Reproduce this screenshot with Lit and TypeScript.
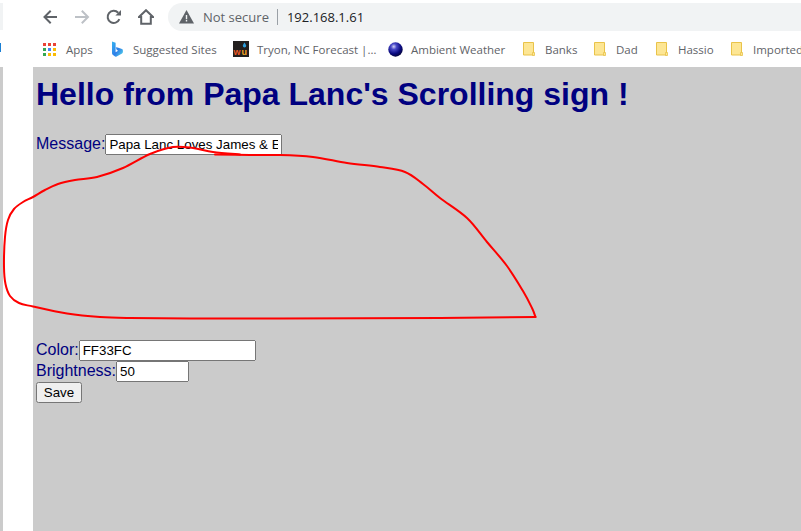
import { LitElement, html, css, svg } from "lit";
import { customElement } from "lit/decorators.js";

type Pt = [number, number];

function smooth(pts: Pt[]): string {
  let d = `M${pts[0][0]} ${pts[0][1]}`;
  for (let i = 0; i < pts.length - 1; i++) {
    const p0 = pts[Math.max(i - 1, 0)];
    const p1 = pts[i];
    const p2 = pts[i + 1];
    const p3 = pts[Math.min(i + 2, pts.length - 1)];
    const c1x = p1[0] + (p2[0] - p0[0]) / 6;
    const c1y = p1[1] + (p2[1] - p0[1]) / 6;
    const c2x = p2[0] - (p3[0] - p1[0]) / 6;
    const c2y = p2[1] - (p3[1] - p1[1]) / 6;
    d += ` C${c1x.toFixed(1)} ${c1y.toFixed(1)} ${c2x.toFixed(1)} ${c2y.toFixed(1)} ${p2[0]} ${p2[1]}`;
  }
  return d;
}

const strokeA: Pt[] = [
  [215, 154.5], [250, 155], [280, 155], [313, 157], [347, 163], [380, 167], [405, 172],
  [423, 184], [440, 198], [467, 218], [487, 242], [507, 266], [523, 291], [532, 308], [535.5, 317],
];
const strokeB: Pt[] = [
  [535.5, 317], [440, 318], [280, 318.5], [190, 318.5], [130, 318], [100, 317], [67, 313.5], [33, 306.5],
  [19, 303], [10, 296], [5.5, 284], [4, 267], [5, 237], [8, 220], [14, 209], [23, 202], [33, 197], [45, 190],
  [58, 184], [75, 180], [97, 177], [123, 168], [150, 154], [173, 147], [193, 148], [213, 152], [240, 154.5],
];

const folder = svg`<svg width="12" height="15" viewBox="0 0 12 15"><path d="M.5.5h10v12.5H.5z" fill="#fde694" stroke="#e9c349"/><path d="M9.5 10.5h2v3h-2z" fill="#fde694" stroke="#e9c349" stroke-width=".8"/></svg>`;

const appsColors = ["#ea4335", "#ea4335", "#ea4335", "#34a853", "#4285f4", "#fbbc04", "#34a853", "#fbbc04", "#fbbc04"];
const apps = svg`<svg width="13" height="13" viewBox="0 0 13 13">${appsColors.map(
  (c, i) => svg`<rect x="${(i % 3) * 5}" y="${Math.floor(i / 3) * 5}" width="3" height="3" fill="${c}"/>`
)}</svg>`;

const bing = svg`<svg width="11" height="16" viewBox="0 0 11 16"><defs><linearGradient id="bg" x1="0" y1="0" x2="1" y2="1"><stop offset="0" stop-color="#35b4f0"/><stop offset=".55" stop-color="#2f7ee8"/><stop offset="1" stop-color="#55dfe8"/></linearGradient></defs><path d="M0 .5l3.6 1.2v9.6l2.6-1.5-1.4-.8-1-2.6 1-.2 5.2 1.9c.6.3.9.8.9 1.4v1.6c0 .6-.3 1-.8 1.3L4.6 15.5c-.5.3-1 .3-1.5 0L1 14c-.6-.4-1-1-1-1.7z" fill="url(#bg)"/></svg>`;

const wu = svg`<svg width="16" height="16" viewBox="0 0 16 16"><rect width="16" height="16" fill="#23201f"/><path d="M11.5 1.5c1 1.6 1.7 2.4 1.7 3.3a1.7 1.7 0 0 1-3.4 0c0-.9.7-1.7 1.7-3.3z" fill="#2f9fdc"/><text x="0.5" y="13.5" font-family="Liberation Sans" font-weight="700" font-size="9" fill="#ef5a24">w</text><text x="8.5" y="13.5" font-family="Liberation Sans" font-weight="700" font-size="9" fill="#f5a623">u</text></svg>`;

const ball = svg`<svg width="15" height="15" viewBox="0 0 15 15"><defs><radialGradient id="sp" cx=".38" cy=".3" r=".7"><stop offset="0" stop-color="#d4d4f4"/><stop offset=".28" stop-color="#4a4ac8"/><stop offset=".7" stop-color="#0a0a80"/><stop offset="1" stop-color="#050540"/></radialGradient></defs><circle cx="7.5" cy="7.5" r="7.2" fill="url(#sp)"/></svg>`;

const bookmarks = [
  { icon: apps, slot: 23, width: 69, label: "Apps" },
  { icon: bing, slot: 21, width: 121, label: "Suggested Sites" },
  { icon: wu, slot: 24, width: 155, label: "Tryon, NC Forecast |…" },
  { icon: ball, slot: 23, width: 135, label: "Ambient Weather" },
  { icon: folder, slot: 22, width: 71, label: "Banks" },
  { icon: folder, slot: 22, width: 62, label: "Dad" },
  { icon: folder, slot: 22, width: 75, label: "Hassio" },
  { icon: folder, slot: 22, width: 90, label: "Imported" },
];

@customElement("app-root")
export class AppRoot extends LitElement {
  static styles = css`
    :host {
      display: block;
      position: relative;
      width: 801px;
      height: 531px;
      overflow: hidden;
      background: #fff;
      font-family: "Liberation Sans", Arial, sans-serif;
    }
    .chrome {
      font-family: "Open Sans", "Noto Sans", sans-serif;
      color: #5f6368;
    }
    .toolbar {
      height: 33px;
      display: flex;
      align-items: flex-start;
      box-sizing: border-box;
      padding-top: 3px;
      overflow: hidden;
    }
    .edge {
      width: 3px;
      height: 27px;
      background: #f1f3f4;
      flex: none;
    }
    .nav {
      display: flex;
      gap: 16px;
      margin-left: 39px;
      padding-top: 6px;
      flex: none;
    }
    .nav svg {
      display: block;
    }
    .omni {
      margin-left: 14px;
      flex: 1;
      height: 28px;
      background: #f1f3f4;
      border-radius: 14px 0 0 14px;
      display: flex;
      align-items: center;
      padding-left: 11px;
      font-size: 13px;
    }
    .warn {
      margin-right: 9px;
      flex: none;
    }
    .sep {
      width: 1px;
      height: 16px;
      background: #9aa0a6;
      margin: 0 9px 0 8px;
    }
    .url {
      color: #202124;
    }
    .bar {
      height: 34px;
      box-sizing: border-box;
      padding: 0 0 2px 43px;
      display: flex;
      align-items: center;
      font-size: 11.5px;
      white-space: nowrap;
      position: relative;
    }
    .mark {
      position: absolute;
      left: 0;
      top: 10px;
      width: 1px;
      height: 9px;
      background: #1a7fd4;
    }
    .bm {
      display: flex;
      align-items: center;
      flex: none;
    }
    .slot {
      display: flex;
      align-items: center;
      flex: none;
    }
    .slot svg {
      display: block;
    }
    .body {
      height: 464px;
      display: flex;
    }
    .sliver {
      width: 3px;
      background: #cbcbcb;
      flex: none;
    }
    .gutter {
      width: 30px;
      flex: none;
      background: #fff;
    }
    .page {
      flex: 1;
      background: #cbcbcb;
      padding-left: 3px;
      color: #000080;
      font-size: 16px;
    }
    h1 {
      margin: 9px 0 21px;
      font-size: 32px;
      line-height: 37px;
      font-weight: 700;
      color: #000080;
    }
    .row {
      display: flex;
      align-items: baseline;
      height: 21px;
    }
    .row.msg {
      margin-bottom: 185px;
    }
    input {
      box-sizing: border-box;
      height: 21px;
      font-family: "Liberation Sans", Arial, sans-serif;
      font-size: 13.33px;
      margin: 0;
    }
    .w-msg,
    .w-color {
      width: 177px;
    }
    .w-bright {
      width: 73px;
    }
    button {
      display: block;
      box-sizing: border-box;
      width: 46px;
      height: 21px;
      padding: 0;
      margin: 0;
      font-family: "Liberation Sans", Arial, sans-serif;
      font-size: 13.33px;
    }
    .ink {
      position: absolute;
      left: 0;
      top: 0;
      pointer-events: none;
    }
  `;

  render() {
    return html`
      <div class="chrome">
        <div class="toolbar">
          <div class="edge"></div>
          <div class="nav">
            <svg width="16" height="16" viewBox="0 0 16 16"><path d="M15 8H3M8.7 1.8L2.5 8l6.2 6.2" fill="none" stroke="#5f6368" stroke-width="2"/></svg>
            <svg width="16" height="16" viewBox="0 0 16 16"><path d="M1 8h12M7.8 1.8L14 8l-6.2 6.2" fill="none" stroke="#bdc1c6" stroke-width="2"/></svg>
            <svg width="16" height="16" viewBox="0 0 16 16"><path d="M13.4 10.2A6.1 6.1 0 1 1 12.2 3.7" fill="none" stroke="#5f6368" stroke-width="2"/><path d="M9.4 6.6h5.6V1z" fill="#5f6368"/></svg>
            <svg width="16" height="16" viewBox="0 0 16 16"><path d="M8 1.2L1 8h2.2v6.8h9.6V8H15z" fill="none" stroke="#5f6368" stroke-width="2"/></svg>
          </div>
          <div class="omni">
            <svg class="warn" width="15" height="14" viewBox="0 0 15 14"><path d="M7.5 0L15 13.5H0z" fill="#5f6368"/><path d="M6.8 5h1.4v4.2H6.8zM6.8 10h1.4v1.5H6.8z" fill="#f1f3f4"/></svg>
            <span>Not secure</span>
            <span class="sep"></span>
            <span class="url">192.168.1.61</span>
          </div>
        </div>
        <div class="bar">
          <div class="mark"></div>
          ${bookmarks.map(
            (b) => html`<div class="bm" style="width:${b.width}px">
              <span class="slot" style="width:${b.slot}px">${b.icon}</span><span>${b.label}</span>
            </div>`
          )}
        </div>
      </div>
      <div class="body">
        <div class="sliver"></div>
        <div class="gutter"></div>
        <div class="page">
          <h1>Hello from Papa Lanc's Scrolling sign !</h1>
          <div class="row msg">
            <label>Message:</label><input class="w-msg" .value=${"Papa Lanc Loves James & E"} />
          </div>
          <div class="row">
            <label>Color:</label><input class="w-color" .value=${"FF33FC"} />
          </div>
          <div class="row">
            <label>Brightness:</label><input class="w-bright" .value=${"50"} />
          </div>
          <button>Save</button>
        </div>
      </div>
      <svg class="ink" width="801" height="531" viewBox="0 0 801 531">
        <path d=${smooth(strokeA)} fill="none" stroke="#fe0000" stroke-width="2" stroke-linecap="round"/>
        <path d=${smooth(strokeB)} fill="none" stroke="#fe0000" stroke-width="2" stroke-linecap="round"/>
      </svg>
    `;
  }
}
